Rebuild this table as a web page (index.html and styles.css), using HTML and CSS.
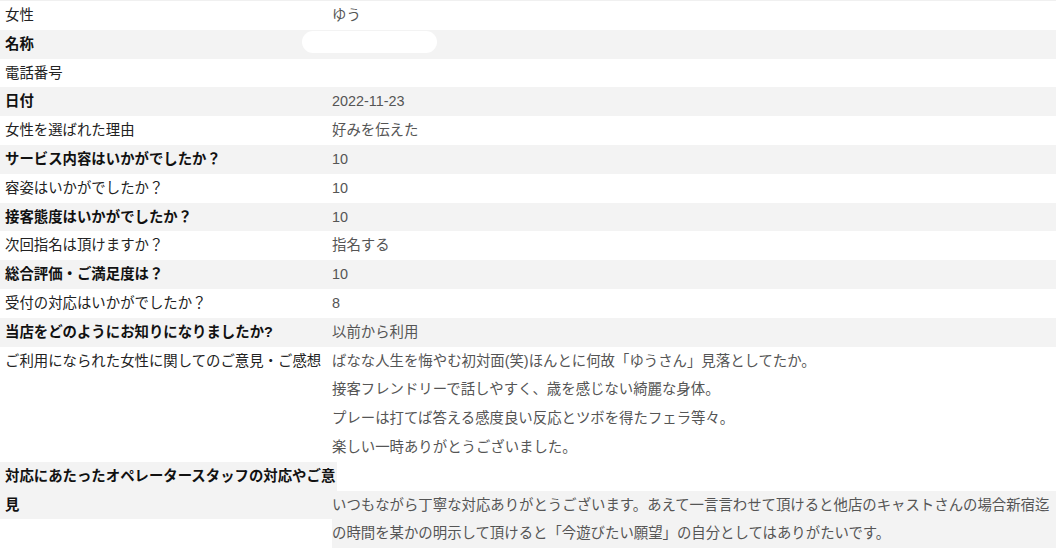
FILE: index.html
```html
<!DOCTYPE html>
<html lang="ja">
<head>
    <meta charset="UTF-8">
    <meta name="viewport" content="width=device-width, initial-scale=1.0">
    <title>アンケート詳細</title>
    <link rel="stylesheet" href="styles.css">
</head>
<body>
    <!-- アンケート結果一覧 -->
    <div class="survey">
        <div class="row">
            <div class="label">女性</div>
            <div class="value">ゆう</div>
        </div>
        <div class="row alt">
            <div class="label">名称</div>
            <div class="value"></div>
            <span class="mask"></span>
        </div>
        <div class="row">
            <div class="label">電話番号</div>
            <div class="value"></div>
        </div>
        <div class="row alt">
            <div class="label">日付</div>
            <div class="value">2022-11-23</div>
        </div>
        <div class="row">
            <div class="label">女性を選ばれた理由</div>
            <div class="value">好みを伝えた</div>
        </div>
        <div class="row alt">
            <div class="label">サービス内容はいかがでしたか？</div>
            <div class="value">10</div>
        </div>
        <div class="row">
            <div class="label">容姿はいかがでしたか？</div>
            <div class="value">10</div>
        </div>
        <div class="row alt">
            <div class="label">接客態度はいかがでしたか？</div>
            <div class="value">10</div>
        </div>
        <div class="row">
            <div class="label">次回指名は頂けますか？</div>
            <div class="value">指名する</div>
        </div>
        <div class="row alt">
            <div class="label">総合評価・ご満足度は？</div>
            <div class="value">10</div>
        </div>
        <div class="row">
            <div class="label">受付の対応はいかがでしたか？</div>
            <div class="value">8</div>
        </div>
        <div class="row alt">
            <div class="label">当店をどのようにお知りになりましたか?</div>
            <div class="value">以前から利用</div>
        </div>
        <div class="row">
            <div class="label">ご利用になられた女性に関してのご意見・ご感想</div>
            <div class="value">ばなな人生を悔やむ初対面(笑)ほんとに何故「ゆうさん」見落としてたか。<br>接客フレンドリーで話しやすく、歳を感じない綺麗な身体。<br>プレーは打てば答える感度良い反応とツボを得たフェラ等々。<br>楽しい一時ありがとうございました。</div>
        </div>
        <div class="row alt split">
            <div class="label">対応にあたったオペレータースタッフの対応やご意見</div>
            <div class="value">いつもながら丁寧な対応ありがとうございます。あえて一言言わせて頂けると他店のキャストさんの場合新宿迄の時間を某かの明示して頂けると「今遊びたい願望」の自分としてはありがたいです。</div>
        </div>
    </div>
</body>
</html>
```

FILE: styles.css
```css
body {
    margin: 0;
    background: #fff;
    font-family: "Liberation Sans", "Noto Sans CJK JP", sans-serif;
    font-size: 14.4px;
    line-height: 28.8px;
}
.survey {
    width: 1056px;
    border-top: 1px solid #f0f0f0;
}
.row {
    display: flex;
    align-items: flex-start;
    position: relative;
}
.label {
    width: 332px;
    flex-shrink: 0;
    box-sizing: border-box;
    padding-left: 5px;
    color: #222;
    min-height: 28.8px;
}
.value {
    flex: 1;
    color: #555;
    min-height: 28.8px;
}
.alt .label,
.alt .value {
    background: #f3f3f3;
}
.alt .label {
    font-weight: bold;
    color: #111;
}
/* 最後の行: 見出しが2行に折り返し、回答は1行下から始まる */
.split .label {
    width: 337px;
}
.split .value {
    margin-top: 28.8px;
    margin-left: -5px;
}
.mask {
    position: absolute;
    left: 302px;
    top: 1px;
    width: 135px;
    height: 22px;
    border-radius: 11px;
    background: #fff;
}
```
